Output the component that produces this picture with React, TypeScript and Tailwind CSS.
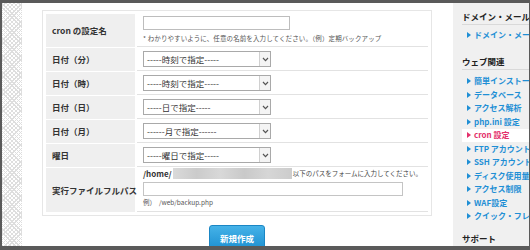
import React from "react";

const Chevron = () => (
  <svg width="7" height="5" viewBox="0 0 7 5" className="block">
    <path d="M1 1 L3.5 3.6 L6 1" fill="none" stroke="#555" strokeWidth="1.2" />
  </svg>
);

const Select = ({ text }: { text: string }) => (
  <div className="flex h-[16px] w-[128px] items-center border border-[#a9a9a9] bg-white">
    <div className="flex-1 pl-[3px] text-[8.5px] leading-[14px] text-[#333] whitespace-nowrap overflow-hidden">
      {text}
    </div>
    <div className="flex h-full w-[11px] items-center justify-center border-l border-[#d0d0d0] bg-[#f4f4f4]">
      <Chevron />
    </div>
  </div>
);

const Label = ({ children }: { children: React.ReactNode }) => (
  <div className="flex w-[89px] shrink-0 items-center bg-[#efefef] pl-[6px] text-[8.5px] font-bold text-[#333] whitespace-nowrap">
    {children}
  </div>
);

const SelectRow = ({ label, text }: { label: string; text: string }) => (
  <div className="flex h-[23px] gap-[2px]">
    <Label>{label}</Label>
    <div className="flex flex-1 items-center border-b border-[#e2e2e2] pl-[6px]">
      <Select text={text} />
    </div>
  </div>
);

const Tri = ({ color }: { color: string }) => (
  <svg width="4" height="6" viewBox="0 0 4 6" className="mr-[3px] shrink-0">
    <path d="M0 0 L4 3 L0 6 Z" fill={color} />
  </svg>
);

const Item = ({ text, active }: { text: string; active?: boolean }) => (
  <div
    className={`flex h-[13.5px] items-center pl-[5px] whitespace-nowrap text-[8px] font-bold ${
      active ? "bg-white text-[#e3306b]" : "text-[#1f8fd5]"
    }`}
  >
    <Tri color={active ? "#e3306b" : "#1f8fd5"} />
    {text}
  </div>
);

export default function App() {
  return (
    <div className="h-[250px] w-[530px] overflow-hidden bg-[#5a5a5a] pt-[3px] pl-[2px] pr-[1px] pb-[4px] font-['Noto_Sans_CJK_JP','Noto_Sans',sans-serif]">
      <div className="flex h-full">
        <div className="w-[20px] shrink-0 bg-white bg-[image:repeating-linear-gradient(45deg,#dedede_0px,#dedede_1px,transparent_1px,transparent_3px),repeating-linear-gradient(-45deg,#dedede_0px,#dedede_1px,transparent_1px,transparent_3px)]" />
        <div className="w-[431px] shrink-0 overflow-hidden bg-white pt-[7px] pl-[20px]">
          <div className="w-[390px] border border-[#e6e6e6] p-[3px]">
            <div className="flex flex-col gap-[1px]">
              <div className="flex h-[33px] gap-[2px]">
                <Label>cron の設定名</Label>
                <div className="flex-1 border-b border-[#e2e2e2] pl-[6px] pt-[2px]">
                  <div className="h-[14px] w-[147px] border border-[#bdbdbd] bg-white" />
                  <div className="mt-[4px] h-[8px] text-[6.5px] leading-[8px] tracking-[0.1px] text-[#555] whitespace-nowrap">
                    * わかりやすいように、任意の名前を入力してください。（例）定期バックアップ
                  </div>
                </div>
              </div>
              <SelectRow label="日付（分）" text="-----時刻で指定-----" />
              <SelectRow label="日付（時）" text="-----時刻で指定-----" />
              <SelectRow label="日付（日）" text="-----日で指定-----" />
              <SelectRow label="日付（月）" text="------月で指定------" />
              <SelectRow label="曜日" text="-----曜日で指定-----" />
              <div className="flex h-[44px] gap-[2px]">
                <Label>実行ファイルフルパス</Label>
                <div className="flex-1 border-b border-[#e2e2e2] pl-[6px]">
                  <div className="flex h-[11px] items-center whitespace-nowrap">
                    <span className="text-[8px] font-bold text-[#333]">/home/</span>
                    <span className="mx-[1px] h-[11px] w-[119px] bg-[image:linear-gradient(90deg,#dadada,#cbcbcb_20%,#d8d8d8_40%,#c9c9c9_60%,#d6d6d6_80%,#cccccc)]" />
                    <span className="text-[6.5px] text-[#444]">以下のパスをフォームに入力してください。</span>
                  </div>
                  <div className="mt-[3px] h-[14px] w-[260px] border border-[#c4c4c4] bg-white" />
                  <div className="mt-[2px] h-[8px] text-[6.5px] leading-[8px] text-[#555] whitespace-nowrap">
                    例）&nbsp;&nbsp;/web/backup.php
                  </div>
                </div>
              </div>
            </div>
          </div>
          <div className="flex w-[390px] justify-center pt-[9px]">
            <div className="flex h-[26px] w-[56px] items-start justify-center rounded-[3px] border border-[#1a86c4] bg-[image:linear-gradient(#45b2e8,#1c8fd0)] pt-[7px] text-[8.5px] font-bold leading-[10px] text-white">
              新規作成
            </div>
          </div>
        </div>
        <div className="flex-1 overflow-hidden bg-[#f0f0f0] pt-[6px] pl-[9px]">
          <div className="h-[16px] border-b border-[#d9d9d9] text-[8.5px] font-bold leading-[15px] text-[#222] whitespace-nowrap">
            ドメイン・メール設定
          </div>
          <div className="mt-[3px]">
            <Item text="ドメイン・メール設定" />
          </div>
          <div className="mt-[12px] h-[16px] border-b border-[#d9d9d9] text-[8.5px] font-bold leading-[15px] text-[#222] whitespace-nowrap">
            ウェブ関連
          </div>
          <div className="mt-[5px]">
            <Item text="簡単インストール" />
            <Item text="データベース" />
            <Item text="アクセス解析" />
            <Item text="php.ini 設定" />
            <Item text="cron 設定" active />
            <Item text="FTP アカウント" />
            <Item text="SSH アカウント" />
            <Item text="ディスク使用量" />
            <Item text="アクセス制限" />
            <Item text="WAF設定" />
            <Item text="クイック・フレーム" />
          </div>
          <div className="mt-[8px] h-[15px] text-[8.5px] font-bold leading-[15px] text-[#222] whitespace-nowrap">
            サポート
          </div>
        </div>
      </div>
    </div>
  );
}
